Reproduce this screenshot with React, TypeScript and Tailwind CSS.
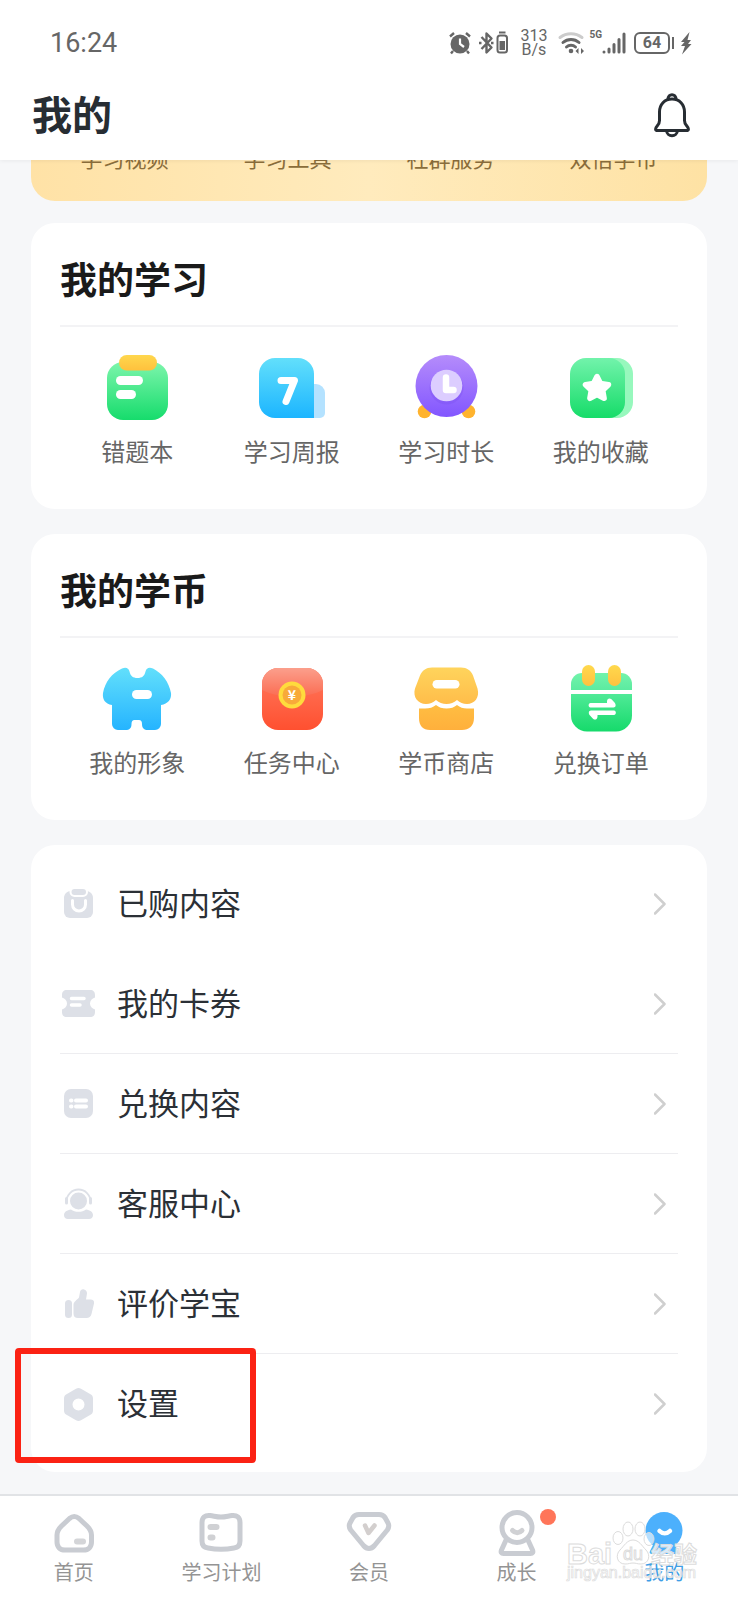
import type { ReactNode } from 'react';

type Item = { label: string; icon: ReactNode };

function Gradient({ id, from, to }: { id: string; from: string; to: string }) {
  return (
    <linearGradient id={id} x1="0" y1="0" x2="0" y2="1">
      <stop offset="0" stopColor={from} />
      <stop offset="1" stopColor={to} />
    </linearGradient>
  );
}

function TileIcon({ children }: { children: ReactNode }) {
  return (
    <svg viewBox="0 0 72 72" className="size-18" aria-hidden="true">
      {children}
    </svg>
  );
}

function RowIcon({ children }: { children: ReactNode }) {
  return (
    <svg viewBox="0 0 32 32" className="size-8 shrink-0 overflow-visible" fill="#dde0e7" aria-hidden="true">
      {children}
    </svg>
  );
}

function TabIcon({ children }: { children: ReactNode }) {
  return (
    <svg
      viewBox="0 0 48 48"
      className="size-12 overflow-visible"
      fill="none"
      stroke="#c9ccd2"
      strokeWidth="5"
      strokeLinecap="round"
      strokeLinejoin="round"
      aria-hidden="true"
    >
      {children}
    </svg>
  );
}

const studyItems: Item[] = [
  {
    label: '错题本',
    icon: (
      <TileIcon>
        <defs>
          <Gradient id="note" from="#7df5ac" to="#16dc6c" />
          <Gradient id="clip" from="#ffd74d" to="#ffc13d" />
        </defs>
        <rect x="6" y="9" width="61" height="58" rx="16" fill="url(#note)" />
        <rect x="18" y="2" width="38" height="15.5" rx="7.7" fill="url(#clip)" />
        <rect x="15" y="23" width="27" height="9" rx="4.5" fill="#fff" />
        <rect x="15" y="37" width="20" height="9" rx="4.5" fill="#fff" />
      </TileIcon>
    ),
  },
  {
    label: '学习周报',
    icon: (
      <TileIcon>
        <defs>
          <Gradient id="week" from="#62dffb" to="#1cb5ff" />
        </defs>
        <path d="M56 31h4a9 9 0 0 1 9 9v20a5 5 0 0 1-5 5h-8z" fill="#b4e2ff" />
        <path d="M19 5h23a16 16 0 0 1 16 16v44H19A16 16 0 0 1 3 49V21A16 16 0 0 1 19 5z" fill="url(#week)" />
        <path d="M25 27.5h13.5L30 48.5" fill="none" stroke="#fff" strokeWidth="7" strokeLinecap="round" strokeLinejoin="round" />
      </TileIcon>
    ),
  },
  {
    label: '学习时长',
    icon: (
      <TileIcon>
        <defs>
          <Gradient id="clock" from="#b58cfb" to="#8256ff" />
        </defs>
        <circle cx="14.5" cy="58.5" r="6.8" fill="#ffb32e" />
        <circle cx="58.5" cy="58.5" r="6.8" fill="#ffb32e" />
        <circle cx="36.5" cy="33" r="31" fill="url(#clock)" />
        <circle cx="36.5" cy="34.5" r="17" fill="#7a4ff0" opacity="0.35" />
        <circle cx="36.5" cy="32.5" r="15.8" fill="#dccdff" />
        <path d="M36 24.5v12.500h7.500" fill="none" stroke="#fff" strokeWidth="6.500" strokeLinecap="round" strokeLinejoin="round" />
      </TileIcon>
    ),
  },
  {
    label: '我的收藏',
    icon: (
      <TileIcon>
        <defs>
          <Gradient id="fav" from="#72f3ab" to="#16dc69" />
        </defs>
        <rect x="24" y="5" width="44" height="60" rx="16" fill="#97f8bd" />
        <rect x="5" y="5" width="55" height="60" rx="16" fill="url(#fav)" />
        <path
          d="M32 23.500l3.500 7 8 1.200-5.800 5.600 1.400 8-7.100-3.700-7.100 3.700 1.400-8-5.800-5.600 8-1.200z"
          fill="#fff"
          stroke="#fff"
          strokeWidth="5.500"
          strokeLinejoin="round"
        />
      </TileIcon>
    ),
  },
];

const coinItems: Item[] = [
  {
    label: '我的形象',
    icon: (
      <TileIcon>
        <defs>
          <Gradient id="shirt" from="#62dffb" to="#25b4ff" />
        </defs>
        <path
          d="M21 4.500c4-1.500 6.500-.5 7.500 3 1 4.500 3.500 6.500 8 6.500s7-2 8-6.500c1-3.500 3.500-4.500 7.500-3C61 9 68 18 70 29c.8 6-3 11-10 12v19a6 6 0 0 1-6 6h-7c-4 0-6-2-6-6 0-2.500-1-4-3-4h-4.500c-2 0-3 1.500-3 4 0 4-2 6-6 6h-7.500a6 6 0 0 1-6-6V41C4 40 1.200 35 2 29 4 18 11 9 21 4.500z"
          fill="url(#shirt)"
        />
        <rect x="31" y="26" width="20" height="9" rx="4.500" fill="#fff" />
      </TileIcon>
    ),
  },
  {
    label: '任务中心',
    icon: (
      <TileIcon>
        <defs>
          <Gradient id="envelope" from="#ff7a5f" to="#ff5030" />
          <Gradient id="flap" from="#fb9f8c" to="#fb6c52" />
        </defs>
        <rect x="6" y="4" width="61" height="62" rx="16" fill="url(#envelope)" />
        <path d="M6 26v-6A16 16 0 0 1 22 4h29a16 16 0 0 1 16 16v6c-18 9-43 9-61 0z" fill="url(#flap)" />
        <circle cx="36" cy="31" r="13.5" fill="#ffdb3d" />
        <circle cx="36" cy="31" r="9.500" fill="#f8aa3a" />
        <text x="36" y="36" textAnchor="middle" fontSize="14" fontWeight="700" fill="#fff">
          ¥
        </text>
      </TileIcon>
    ),
  },
  {
    label: '学币商店',
    icon: (
      <TileIcon>
        <defs>
          <Gradient id="awning" from="#ffd45c" to="#ffbd4a" />
          <Gradient id="store" from="#ffbd42" to="#ffb03c" />
        </defs>
        <path
          d="M22 3.500h29c6 0 10 3 12 8l4.500 13c2.500 9-3 15.500-10.500 15.500-4 0-7-1.500-10-4-3 2.500-6.500 4-10.500 4S29 38.500 26 36c-3 2.500-6 4-10 4C8 40 2.500 33 5 24.500l5-13c2-5 6-8 12-8z"
          fill="url(#awning)"
        />
        <path
          d="M9 44.500h6c4.500 0 8-1 11-3.500 3 2.500 6 3.500 10.500 3.500s7.500-1 10.500-3.500c3 2.500 6 3.500 10 3.500h7V54c0 8-5 12-12 12H20C13 66 9 62 9 54z"
          fill="url(#store)"
        />
        <rect x="22.500" y="16" width="27" height="8.500" rx="4.250" fill="#fff" />
      </TileIcon>
    ),
  },
  {
    label: '兑换订单',
    icon: (
      <TileIcon>
        <defs>
          <Gradient id="caltop" from="#72f3ab" to="#5ceba0" />
          <Gradient id="calbody" from="#4fea97" to="#16da6b" />
          <Gradient id="pin" from="#ffd94d" to="#ffc140" />
        </defs>
        <path d="M6 26v-6A11 11 0 0 1 17 9h39a11 11 0 0 1 11 11v6z" fill="url(#caltop)" />
        <path d="M6 30h61v21.500a16 16 0 0 1-16 16H22a16 16 0 0 1-16-16z" fill="url(#calbody)" />
        <rect x="17" y="1" width="13" height="21" rx="6.500" fill="url(#pin)" />
        <rect x="43" y="1" width="13" height="21" rx="6.500" fill="url(#pin)" />
        <path id="half-arrow" d="M25.500 39H42v-1.500c0-3 2.500-4 4.500-2.200l3 3.200c1.800 2 1.500 5-1 5h-23c-2.500 0-2.500-4.500 0-4.500z" fill="#fff" />
        <use href="#half-arrow" transform="rotate(180 37.250 45)" />
      </TileIcon>
    ),
  },
];

const menuItems: Item[] = [
  {
    label: '已购内容',
    icon: (
      <RowIcon>
        <path d="M9 3h15c4 0 7 3 7 7v14a6 6 0 0 1-6 6H8a6 6 0 0 1-6-6V10c0-4 3-7 7-7z" />
        <rect x="8.500" y="0" width="16.500" height="8" rx="4" stroke="#fff" strokeWidth="2" />
        <path d="M10.500 12.500v4a6.500 6.500 0 0 0 13 0v-4" fill="none" stroke="#fff" strokeWidth="3" strokeLinecap="round" />
      </RowIcon>
    ),
  },
  {
    label: '我的卡券',
    icon: (
      <RowIcon>
        <path d="M5 2h23c3.500 0 5 2 5 5v2.500c-3 1-5 3-5 6s2 5 5 6V24c0 3-1.500 5-5 5H5c-3.500 0-5-2-5-5v-2.500c3-1 5-3 5-6s-2-5-5-6V7c0-3 1.500-5 5-5z" />
        <path d="M9.500 10.500H22M9.500 17H18" stroke="#fff" strokeWidth="3.500" strokeLinecap="round" />
      </RowIcon>
    ),
  },
  {
    label: '兑换内容',
    icon: (
      <RowIcon>
        <rect x="2" y="1" width="29" height="29" rx="7" />
        <path d="M14 12.500h10M14 18.500h10M9 12.500h.5M9 18.500h.5" stroke="#fff" strokeWidth="4" strokeLinecap="round" />
      </RowIcon>
    ),
  },
  {
    label: '客服中心',
    icon: (
      <RowIcon>
        <circle cx="16.500" cy="13" r="8.500" />
        <path d="M4.500 13.500a12 12 0 0 1 24 0" fill="none" stroke="#dde0e7" strokeWidth="1.800" />
        <path d="M4.500 10.500v4.500M28.500 10.500v4.500" stroke="#dde0e7" strokeWidth="3" strokeLinecap="round" />
        <path d="M9 21.500c2 1.500 4.500 2.300 7.500 2.300s5.500-.8 7.500-2.300c4 .5 7 2.500 7 5.500 0 2.500-1.500 4-4 4H6c-2.500 0-4-1.500-4-4 0-3 3-5 7-5.500z" />
      </RowIcon>
    ),
  },
  {
    label: '评价学宝',
    icon: (
      <RowIcon>
        <rect x="3" y="12" width="7" height="18" rx="3.500" />
        <path d="M17 9.500 18 4c.5-2 2-3 4-2.500s3 2 3 4l-1 6h4.500c2.500 0 4 1.500 3.500 4l-2.500 10.500c-.6 2.700-2.500 4-5 4H16c-3 0-4.500-1.500-4.500-4.500V17c0-3.500 3.500-5 5.500-7.500z" />
      </RowIcon>
    ),
  },
  {
    label: '设置',
    icon: (
      <RowIcon>
        <path
          fillRule="evenodd"
          d="M14 .8c1.700-1 3.300-1 5 0l9.500 5.400C30.300 7.200 31 8.500 31 10.500v12c0 2-.7 3.300-2.500 4.300L19 32.200c-1.700 1-3.300 1-5 0l-9.500-5.400C2.700 25.800 2 24.500 2 22.500v-12c0-2 .7-3.300 2.500-4.300zM16.500 10.500a6 6 0 1 0 0 12 6 6 0 0 0 0-12z"
        />
      </RowIcon>
    ),
  },
];

const tabs: (Item & { active?: boolean; dot?: boolean })[] = [
  {
    label: '首页',
    icon: (
      <TabIcon>
        <path d="M19.500 9.500c3-2.500 6.500-2.500 9.500 0l8 7.500c3 3 4.500 5 4.500 9v7c0 5-3 8-8 8H15c-5 0-8-3-8-8v-7c0-4 1.500-6 4.500-9z" />
        <path d="M27 32.500h6" stroke="#d4d5d8" strokeWidth="6" />
      </TabIcon>
    ),
  },
  {
    label: '学习计划',
    icon: (
      <TabIcon>
        <path d="M13 6.500c4 .5 7 1.500 11 1.500s7-1 11-1.500c5-.5 8 2 8 7V32c0 4-2 6.500-6 7-9 1.700-17 1.700-26 0-4-.5-6-3-6-7V13.500c0-5 3-7.500 8-7z" />
        <path d="M13.500 18h6M13.500 28.500h2" stroke="#d0d1d4" strokeWidth="6" />
      </TabIcon>
    ),
  },
  {
    label: '会员',
    icon: (
      <TabIcon>
        <path d="M14 5.500h20c3 0 4.500.8 6 3l3 5.500c1.300 2.500 1 4.500-.7 7L29.500 36.500c-3.500 4-7.500 4-11 0L5.700 21C4 18.500 3.700 16.500 5 14l3-5.500c1.500-2.200 3-3 6-3z" />
        <path d="M20 16.500 23.500 24l6-7.500" stroke="#d3cfce" strokeWidth="4.500" />
      </TabIcon>
    ),
  },
  {
    label: '成长',
    dot: true,
    icon: (
      <TabIcon>
        <circle cx="24" cy="18.500" r="15" />
        <path d="M13.500 30 8.500 41c-1 2.500 0 3.500 2 3.500h27c2 0 3-1 2-3.500L34.500 30" />
        <path d="M19.500 21.500c3 3 6.500 3 9.500 0" stroke="#d0d1d4" />
      </TabIcon>
    ),
  },
  {
    label: '我的',
    active: true,
    icon: (
      <TabIcon>
        <circle cx="24" cy="21.500" r="18.500" fill="#4cb0fc" stroke="none" />
        <path d="M14 34h20l4 8c1 2 0 3-2 3H12c-2 0-3-1-2-3z" fill="#4cb0fc" stroke="none" />
        <path d="M19.500 22c3 3 7.500 3 10.500 0" stroke="#fff" strokeWidth="4.500" />
      </TabIcon>
    ),
  },
];

function StatusBar() {
  return (
    <div className="flex h-20 items-center justify-between pt-1.5 pr-[46px] pl-[50px] font-['Roboto','Noto_Sans_CJK_SC',sans-serif] text-[#666]">
      <time className="text-[27px] leading-8">16:24</time>
      <div className="flex items-center">
        <svg viewBox="0 0 24 24" className="size-6" fill="none" stroke="#666" aria-label="闹钟">
          <circle cx="12" cy="13" r="9.500" fill="#666" stroke="none" />
          <path d="M2 5.500 6 2M22 5.500 18 2M5 20l-2 2.500M19 20l2 2.500" strokeWidth="2.400" />
          <path d="M12 7.500V13l4 3" stroke="#fff" strokeWidth="2.200" />
        </svg>
        <svg viewBox="0 0 32 24" className="ml-1.5 h-6 w-8" fill="none" stroke="#666" aria-label="蓝牙">
          <path d="m3.500 6 10 10.500-5 5v-19l5 5L3.500 18" strokeWidth="2.400" strokeLinejoin="round" />
          <path d="M1 12h2.500M13 12h2.500" strokeWidth="2.400" />
          <rect x="19.500" y="4.500" width="9.500" height="17" rx="2.500" strokeWidth="2" />
          <path d="M21 1.500h6.500" strokeWidth="2" />
          <rect x="21.500" y="10" width="5.500" height="9" fill="#666" stroke="none" />
        </svg>
        <p className="ml-2.5 flex flex-col text-center text-base leading-[14px]">
          <span>313</span>
          <span>B/s</span>
        </p>
        <svg viewBox="0 0 28 24" className="ml-2.5 h-6 w-7" fill="none" stroke="#666" strokeWidth="3" strokeLinecap="round" aria-label="无线网络">
          <path d="M3 6.500c6.500-5 15.500-5 22 0" stroke="#ccc" />
          <path d="M6 11.500c4.500-4 11.500-4 16 0M9.500 16c2.500-2.300 6.500-2.300 9 0" />
          <circle cx="14" cy="20" r="2.300" fill="#666" stroke="none" />
          <path d="m21.500 17-3 3 3 3zM24 17l3 3-3 3z" fill="#666" stroke="none" />
        </svg>
        <span className="ml-1 self-start text-[10px] leading-3 font-bold">5G</span>
        <svg viewBox="0 0 24 24" className="h-6 w-6" stroke="#666" strokeWidth="3" strokeLinecap="round" aria-label="信号">
          <path d="M2 21v.1M7 18v3M12 13.500V21M17 8.500V21M22 3V21" />
        </svg>
        <div className="ml-2 flex items-center gap-0.5">
          <span className="flex h-[22px] w-9 items-center justify-center rounded-md border-2 border-[#666] text-base font-bold">64</span>
          <span className="h-3 w-0.5 bg-[#666]" />
        </div>
        <svg viewBox="0 0 12 24" className="ml-1.5 h-6 w-3" fill="#666" aria-label="充电中">
          <path d="M9.500 1 1 11h3.500L1 15h4L2 23.500 11.500 13H8l3-4H7.500z" />
        </svg>
      </div>
    </div>
  );
}

function Card({ title, items }: { title: string; items: Item[] }) {
  return (
    <section className="rounded-3xl bg-white px-[29px] pt-[30px] pb-[42px]">
      <h2 className="border-b-2 border-[#f3f3f5] pb-[22px] text-[37px] leading-[50px] font-bold text-[#1a1a1a]">{title}</h2>
      <ul className="grid grid-cols-4 pt-[26px]">
        {items.map((item) => (
          <li key={item.label}>
            <a href="#" className="flex flex-col items-center gap-2.5 text-2xl leading-8 text-[#666]">
              {item.icon}
              {item.label}
            </a>
          </li>
        ))}
      </ul>
    </section>
  );
}

function Watermark() {
  return (
    <svg
      viewBox="0 0 136 66"
      className="pointer-events-none absolute top-5 right-[38px] h-[66px] w-[136px]"
      fill="#fff"
      fillOpacity="0.6"
      stroke="#dcdcdc"
      strokeWidth="1"
      fontFamily="'Liberation Sans', 'Noto Sans CJK SC', sans-serif"
      aria-hidden="true"
    >
      <text x="3" y="48" fontSize="29" fontWeight="700">Bai</text>
      <ellipse cx="54" cy="22" rx="5" ry="6.500" />
      <ellipse cx="64" cy="13" rx="5" ry="7" />
      <ellipse cx="76" cy="13" rx="5" ry="7" />
      <ellipse cx="85" cy="23" rx="5" ry="6.500" />
      <path d="M69 24c6 0 9 6 13 10 5 5 3 14-5 14-4 0-5-1-8-1s-4 1-8 1c-8 0-10-9-5-14 4-4 7-10 13-10z" />
      <text x="59" y="44" fontSize="18">du</text>
      <text x="87" y="47" fontSize="23" fontWeight="700" fillOpacity="0.8">经验</text>
      <text x="3" y="62" fontSize="16" strokeWidth="0.700">jingyan.baidu.com</text>
    </svg>
  );
}

export default function App() {
  return (
    <div className="flex min-h-screen flex-col bg-[#f6f7f9] font-['Noto_Sans_CJK_SC',sans-serif]">
      <header className="relative h-40 bg-white shadow-[0_1px_4px_rgba(0,0,0,0.06)]">
        <StatusBar />
        <div className="flex h-[70px] items-center justify-between pr-12 pl-8">
          <h1 className="pb-1 text-[40px] leading-[56px] font-bold text-[#272d33]">我的</h1>
          <button type="button" aria-label="消息">
            <svg viewBox="0 0 36 46" className="h-[46px] w-9" fill="none" stroke="#272d33" strokeWidth="3" strokeLinejoin="round" aria-hidden="true">
              <path d="M18 7C10.500 7 5.500 12.500 5.500 20v8.500c0 2-.6 3.300-2 5C.8 36.800 1 38.500 4 38.500h28c3 0 3.200-1.700.5-5-1.400-1.700-2-3-2-5V20C30.500 12.500 25.500 7 18 7z" />
              <path d="M14 7.500c0-6.500 8-6.500 8 0M12.500 38.500c.5 7 10.500 7 11 0" />
            </svg>
          </button>
        </div>
      </header>

      <main className="flex grow flex-col px-[31px] pb-[22px]">
        <nav className="flex h-[41px] items-end overflow-hidden rounded-b-3xl bg-linear-to-r from-[#ffe2a6] via-[#ffebbd] to-[#fee2a4] px-3 pb-8">
          {['学习视频', '学习工具', '社群服务', '双倍学币'].map((label) => (
            <a key={label} href="#" className="flex-1 text-center text-[22px] leading-6 text-[#8a6d3b]">
              {label}
            </a>
          ))}
        </nav>

        <div className="flex flex-col gap-[25px] pt-[22px]">
          <Card title="我的学习" items={studyItems} />
          <Card title="我的学币" items={coinItems} />

          <ul className="rounded-3xl bg-white px-[29px] pt-[9px] pb-[18px]">
            {menuItems.map((item, i) => (
              <li
                key={item.label}
                className={
                  i === 0 || i === menuItems.length - 1
                    ? 'relative border-b border-transparent'
                    : 'relative border-b border-[#ededf0]'
                }
              >
                <a href="#" className="flex h-[99px] items-center gap-[23px] pr-3 pl-0.5 text-[31px] leading-10 text-[#2b3036]">
                  {item.icon}
                  <span className="grow pb-1">{item.label}</span>
                  <svg viewBox="0 0 12 22" className="h-[22px] w-3" fill="none" stroke="#cfcfcf" strokeWidth="2.500" strokeLinecap="round" strokeLinejoin="round" aria-hidden="true">
                    <path d="m1 1.500 9.500 9.500L1 20.500" />
                  </svg>
                </a>
                {item.label === '设置' && (
                  <span className="pointer-events-none absolute -top-1.5 -left-[45px] h-[115px] w-[241px] rounded border-[6px] border-[#fb2214]" />
                )}
              </li>
            ))}
          </ul>
        </div>
      </main>

      <footer className="relative border-t-2 border-[#e1e3e6] bg-white pt-[13px] pb-3.5">
        <nav className="grid grid-cols-5">
          {tabs.map((tab) => (
            <a
              key={tab.label}
              href="#"
              className={
                tab.active
                  ? 'flex flex-col items-center gap-px text-xl leading-7 text-[#3f9ee6]'
                  : 'flex flex-col items-center gap-px text-xl leading-7 text-[#949494]'
              }
            >
              <span className="relative">
                {tab.icon}
                {tab.dot && <span className="absolute top-0 -right-[15px] size-4 rounded-full bg-[#ff7559]" />}
              </span>
              {tab.label}
            </a>
          ))}
        </nav>
        <Watermark />
      </footer>
    </div>
  );
}
